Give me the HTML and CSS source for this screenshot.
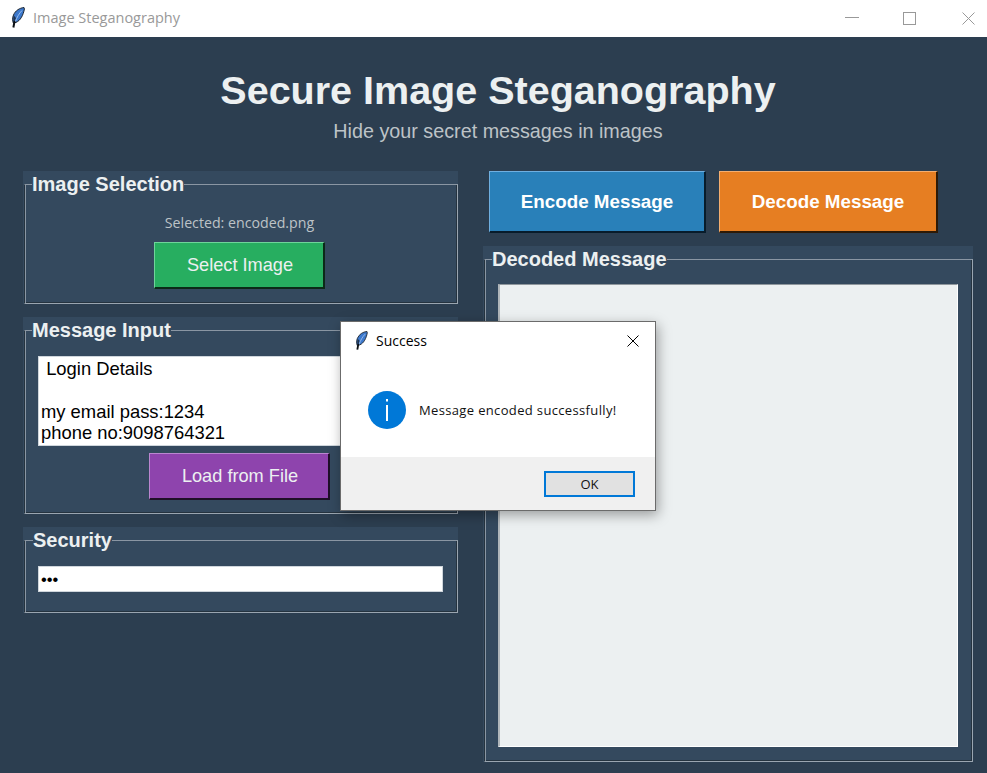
FILE: index.html
```html
<!DOCTYPE html>
<html lang="en">
<head>
  <meta charset="UTF-8"/>
  <meta name="viewport" content="width=device-width,initial-scale=1.0"/>
  <title>Image Steganography</title>
  <link rel="stylesheet" href="styles.css">
</head>
<body>

  <!-- hidden symbol for the tk feather, used twice -->
  <svg class="defs" width="0" height="0">
    <symbol id="feather" viewBox="0 0 14 21">
      <path d="M13 .5C8.500 1 4.500 3.500 2.500 8 1.300 10.800 1.400 13.600 2.300 16l2.700 -.6C9.500 13.600 12.300 8 13.400 2z" fill="#3c78cc" stroke="#1d2630" stroke-width="1"/>
      <path d="M2.800 8.500C2 11 2.200 13.500 3 15.500L5 11z" fill="#1f3350"/>
      <path d="M11 3.500C8 6.500 5.800 10.500 4.300 15" fill="none" stroke="#9cc0ee" stroke-width="1"/>
      <path d="M3.600 14 2.400 20.500" fill="none" stroke="#0c1014" stroke-width="2"/>
    </symbol>
  </svg>

  <!-- TITLE BAR -->
  <header class="titlebar">
    <svg class="feather" width="14" height="21"><use href="#feather"/></svg>
    <span class="titlebar-text">Image Steganography</span>
    <div class="win-controls">
      <svg width="14" height="12" viewBox="0 0 14 12"><path d="M0 5.500h14" stroke="#999" fill="none"/></svg>
      <svg width="13" height="13" viewBox="0 0 13 13"><rect x=".5" y=".5" width="12" height="12" stroke="#999" fill="none"/></svg>
      <svg class="win-close" width="13" height="13" viewBox="0 0 13 13"><path d="M.5 .5l12 12M12.500 .5l-12 12" stroke="#999" fill="none"/></svg>
    </div>
  </header>

  <main class="app">
    <div class="heading">
      <h1>Secure Image Steganography</h1>
      <p>Hide your secret messages in images</p>
    </div>

    <div class="columns">
      <div class="col-left">
        <div class="panel panel-image">
          <fieldset>
            <legend>Image Selection</legend>
            <div class="selected">Selected: encoded.png</div>
            <button class="btn btn-green">Select Image</button>
          </fieldset>
        </div>

        <div class="panel panel-message">
          <fieldset>
            <legend>Message Input</legend>
            <textarea class="msg" readonly> Login Details

my email pass:1234
phone no:9098764321</textarea>
            <button class="btn btn-purple">Load from File</button>
          </fieldset>
        </div>

        <div class="panel panel-security">
          <fieldset>
            <legend class="legend-security">Security</legend>
            <input class="key" type="password" value="123"/>
          </fieldset>
        </div>
      </div>

      <div class="col-right">
        <div class="actions">
          <button class="btn btn-bold btn-blue">Encode Message</button>
          <button class="btn btn-bold btn-orange">Decode Message</button>
        </div>
        <div class="panel panel-decoded">
          <fieldset>
            <legend>Decoded Message</legend>
            <div class="decoded"></div>
          </fieldset>
        </div>
      </div>
    </div>
  </main>

  <!-- MESSAGE BOX -->
  <div class="dialog">
    <div class="dialog-title">
      <svg class="feather-small" width="13" height="19"><use href="#feather"/></svg>
      <span>Success</span>
      <svg class="dialog-close" width="12" height="12" viewBox="0 0 12 12"><path d="M.5 .5l11 11M11.500 .5l-11 11" stroke="#000" fill="none"/></svg>
    </div>
    <div class="dialog-body">
      <svg width="38" height="38" viewBox="0 0 38 38">
        <circle cx="19" cy="19" r="19" fill="#0078d7"/>
        <rect x="18" y="14" width="2" height="16" fill="#fff"/>
        <rect x="18" y="8" width="2" height="2.500" fill="#fff"/>
      </svg>
      <span>Message encoded successfully!</span>
    </div>
    <div class="dialog-footer">
      <button class="ok">OK</button>
    </div>
  </div>

</body>
</html>
```

FILE: styles.css
```css
* { box-sizing: border-box; }
html, body { margin: 0; height: 100%; }
body { width: 987px; height: 773px; overflow: hidden; position: relative; font-family: "Liberation Sans", sans-serif; background: #2c3e50; }
.defs { position: absolute; }

/* title bar */
.titlebar { height: 37px; background: #fff; display: flex; align-items: center; padding-left: 11px; }
.feather { margin-right: 8px; margin-top: -3px; }
.titlebar-text { font: 14.500px "Open Sans", sans-serif; color: #999; margin-top: -3px; }
.win-controls { margin-left: auto; display: flex; align-items: center; gap: 44px; padding-right: 12px; margin-top: -1px; }
.win-close { margin-left: 2px; }

/* main */
.app { padding: 0 14px 0 23px; }
.heading { height: 134px; text-align: center; padding-top: 29px; }
.heading h1 { margin: 0; font-size: 39.500px; line-height: 48px; font-weight: bold; color: #ecf0f1; }
.heading p { margin: 5px 0 0; font-size: 19.750px; line-height: 24px; color: #bdc3c7; }

.columns { display: flex; gap: 25px; align-items: flex-start; }
.col-left { width: 435px; display: flex; flex-direction: column; gap: 13px; }
.col-right { width: 490px; }

/* labelframes */
.panel { background: #34495e; padding: 0 0 0 1px; display: flex; }
fieldset {
  flex: 1;
  min-width: 0;
  margin: 0;
  padding: 0 3px 0 0;
  border: 1px solid;
  border-color: #8a96a3 #9aa5b0 #9aa5b0 #25333f;
  box-shadow: inset 1px 0 0 #8a96a3, inset -1px -1px 0 #25333f;
  display: flex;
  flex-direction: column;
  align-items: center;
}
legend { margin-left: 7px; padding: 0; font-size: 20px; line-height: 26px; font-weight: bold; color: #ecf0f1; }
.legend-security { margin-left: 8px; }
.panel-image { height: 133px; }
.panel-message { height: 197px; }
.panel-security { height: 86px; }
.panel-decoded { height: 516px; width: 490px; margin-top: 13px; }

.selected { font: 14.200px "Open Sans", sans-serif; color: #bdc3c7; margin-top: 16px; height: 20px; line-height: 20px; }
.panel-image .btn { margin-top: 9px; }

/* buttons */
.btn {
  display: block;
  padding: 0 0 0 2px;
  font-family: "Liberation Sans", sans-serif;
  font-size: 18.200px;
  color: #ecf0f1;
  border-style: solid;
  border-width: 1px 2px 2px 1px;
  cursor: pointer;
}
.btn-bold { font-size: 18.800px; font-weight: bold; color: #fff; padding: 0; }
.btn-green { width: 171px; height: 47px; background: #27ae60; border-color: #6fd49a #0b2a18 #0b2a18 #6fd49a; }
.btn-purple { width: 181px; height: 47px; margin-top: 7px; background: #8e44ad; border-color: #bb86d0 #1f0f28 #1f0f28 #bb86d0; }
.btn-blue { width: 217px; height: 62px; background: #2980b9; border-color: #6fafe0 #081c2b #081c2b #6fafe0; }
.btn-orange { width: 219px; height: 62px; background: #e67e22; border-color: #f4ae70 #2e1a06 #2e1a06 #f4ae70; }
.actions { display: flex; gap: 13px; padding-left: 6px; }

/* inputs */
.msg, .key { display: block; align-self: flex-start; width: 405px; margin: 0 0 0 13px; border: 1px solid #cfd6dc; background: #fff; color: #000; outline: none; }
.msg {
  height: 90px;
  margin-top: 13px;
  padding: 1px 2px 0;
  font: 18.400px/21.300px "Liberation Sans", sans-serif;
  overflow: hidden;
  resize: none;
}
.key { height: 26px; margin-top: 13px; padding: 0 2px; font: 16.500px "Liberation Sans", sans-serif; }
.decoded { align-self: flex-start; width: 460px; height: 463px; margin: 12px 0 0 13px; background: #ecf0f1; border: 1px solid #fff; border-top-color: #8f979d; border-left: 2px solid #b0b6ba; }

/* message box, sits over the app window */
.dialog {
  position: absolute;
  left: 340px;
  top: 321px;
  width: 316px;
  height: 190px;
  background: #fff;
  border: 1px solid #6b6b6b;
  box-shadow: 2px 4px 12px rgba(0, 0, 0, .35);
  font-family: "Open Sans", sans-serif;
  display: flex;
  flex-direction: column;
}
.dialog-title { height: 37px; display: flex; align-items: center; padding: 0 16px 0 14px; font-size: 14px; color: #000; }
.feather-small { margin-right: 8px; }
.dialog-close { margin-left: auto; }
.dialog-body { height: 98px; display: flex; align-items: center; gap: 13px; padding: 4px 0 0 27px; font-size: 13px; letter-spacing: .35px; color: #111; }
.dialog-footer { flex: 1; background: #f0f0f0; padding: 14px 0 0 203px; }
.ok { display: block; width: 91px; height: 26px; padding: 0; background: #e1e1e1; border: 2px solid #0078d7; font: 13px "Open Sans", sans-serif; color: #111; }
```
